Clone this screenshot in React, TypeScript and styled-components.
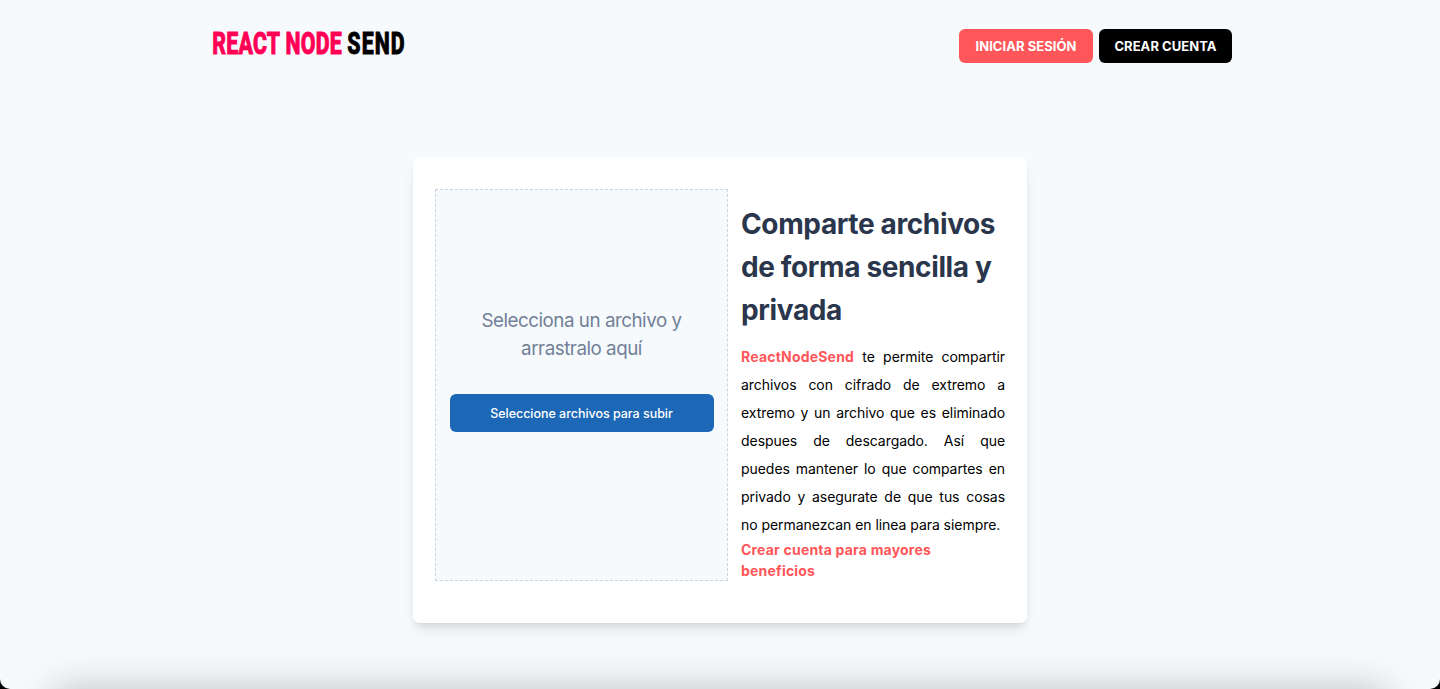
import React from 'react';
import styled, { createGlobalStyle } from 'styled-components';

const GlobalStyle = createGlobalStyle`
  *, *::before, *::after { box-sizing: border-box; }
  html { background: #000; }
  body { margin: 0; overflow: hidden; }
  h1, p { margin: 0; }
`;

const Page = styled.div`
  position: relative;
  height: 689px;
  overflow: hidden;
  background: #f6fafd;
  border-radius: 0 0 10px 10px;
  color: #000;
  font-family: Inter, 'Liberation Sans', sans-serif;
  font-size: 14px;
  line-height: 1.5;
`;

const Container = styled.div`
  width: 1024px;
  margin: 0 auto;
`;

const Header = styled.header`
  display: flex;
  justify-content: space-between;
  align-items: flex-start;
  padding-top: 19px;
`;

const Logo = styled.svg`
  display: block;
  overflow: visible;
  font-family: Roboto, sans-serif;
  font-size: 30.5px;
  font-weight: 800;
`;

const Nav = styled.nav`
  display: flex;
  gap: 6px;
  margin-top: 10px;
`;

const NavLink = styled.a<{ $bg: string; $width: number }>`
  display: flex;
  align-items: center;
  justify-content: center;
  width: ${(p) => p.$width}px;
  height: 34px;
  padding-top: 1px;
  border-radius: 6px;
  background: ${(p) => p.$bg};
  color: #fff;
  font-size: 13px;
  font-weight: 700;
  letter-spacing: 0.05px;
  text-transform: uppercase;
  white-space: nowrap;
`;

const Card = styled.main`
  display: flex;
  gap: 13px;
  width: 614px;
  height: 466px;
  margin: 88px auto 0;
  padding: 32px 22px 42px;
  background: #fff;
  border-radius: 7px;
  box-shadow: 0 9px 13px -3px rgba(0, 0, 0, 0.1), 0 4px 6px -2px rgba(0, 0, 0, 0.07);
`;

const DropZone = styled.section`
  display: flex;
  flex-direction: column;
  flex: 0 0 293px;
  padding: 117px 13px 0 14px;
  border: 1px dashed #cbd5e0;
  background: #f6fafd;
`;

const DropText = styled.p`
  padding-right: 1px;
  color: #718096;
  font-size: 18.8px;
  line-height: 28px;
  letter-spacing: -0.48px;
  text-align: center;
  white-space: nowrap;
`;

const UploadButton = styled.button`
  height: 38px;
  margin-top: 31px;
  padding: 0 1px 0 0;
  border: 0;
  border-radius: 6px;
  background: #1c67b6;
  color: #fff;
  font: 500 12.5px Inter, sans-serif;
  letter-spacing: -0.03px;
`;

const Info = styled.section`
  flex: 0 0 264px;
  padding-top: 14px;
`;

const Title = styled.h1`
  color: #2a364b;
  font-size: 28px;
  font-weight: 700;
  line-height: 43px;
  letter-spacing: -0.37px;
  white-space: nowrap;
`;

const Description = styled.p`
  margin-top: 11px;
  line-height: 28px;
  letter-spacing: -0.05px;
  text-align: justify;
`;

const Brand = styled.span`
  color: #ff5659;
  font-weight: 700;
  letter-spacing: 0.2px;
`;

const SignupLink = styled.a`
  display: block;
  color: #ff5659;
  font-weight: 700;
  line-height: 21px;
  letter-spacing: 0.2px;
`;

const BottomShade = styled.div`
  position: absolute;
  left: 54px;
  right: 54px;
  top: 692px;
  height: 60px;
  box-shadow: 0 0 42px rgba(0, 0, 0, 0.27);
`;

export default function App() {
  return (
    <Page>
      <GlobalStyle />
      <Container>
        <Header>
          <Logo width="200" height="50" viewBox="0 0 200 50">
            <g transform="scale(0.7 1)" strokeWidth="0.9">
              <text x="6" y="35" fill="#ff0055" stroke="#ff0055" textLength="185" lengthAdjust="spacing">REACT NODE</text>
              <text x="199" y="35" fill="#000" stroke="#000" textLength="82" lengthAdjust="spacing">SEND</text>
            </g>
          </Logo>
          <Nav>
            <NavLink $bg="#ff5659" $width={134}>Iniciar sesión</NavLink>
            <NavLink $bg="#000" $width={133}>Crear cuenta</NavLink>
          </Nav>
        </Header>
        <Card>
          <DropZone>
            <DropText>
              Selecciona un archivo y<br />arrastralo aquí
            </DropText>
            <UploadButton>Seleccione archivos para subir</UploadButton>
          </DropZone>
          <Info>
            <Title>
              Comparte archivos<br />de forma sencilla y<br />privada
            </Title>
            <Description>
              <Brand>ReactNodeSend</Brand> te permite compartir archivos con cifrado de extremo a
              extremo y un archivo que es eliminado despues de descargado. Así que puedes mantener
              lo que compartes en privado y asegurate de que tus cosas no permanezcan en linea para
              siempre.
            </Description>
            <SignupLink>
              Crear cuenta para mayores<br />beneficios
            </SignupLink>
          </Info>
        </Card>
      </Container>
      <BottomShade />
    </Page>
  );
}
